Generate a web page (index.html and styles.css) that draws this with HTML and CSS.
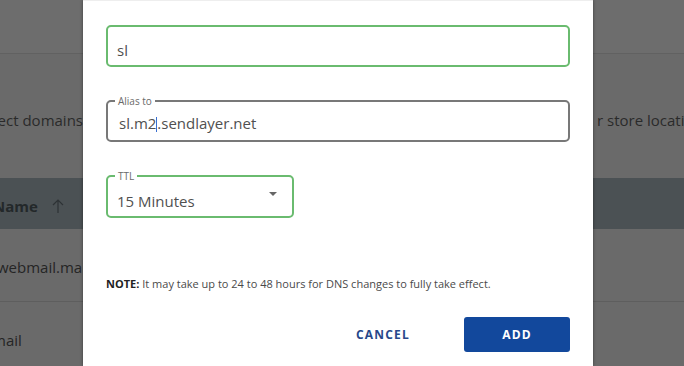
FILE: index.html
```html
<!DOCTYPE html>
<html lang="en">
<head>
  <meta charset="UTF-8" />
  <title>Add DNS record</title>
  <meta name="viewport" content="width=device-width, initial-scale=1" />
  <link rel="stylesheet" href="styles.css">
</head>
<body>
  <div class="page">
    <div class="topbar"></div>
    <div class="intro">
      <span class="intro-left">Select domains</span>
      <span></span>
      <span class="intro-right">r store location</span>
    </div>
    <div class="thead">
      <span class="col-name">Name</span>
      <svg class="sort" width="12" height="15" viewBox="0 0 12 15">
        <path d="M6 14V1M1 6l5-5 5 5" fill="none" stroke="#2e3336" stroke-width="1.2" />
      </svg>
    </div>
    <div class="row"><span class="cell">webmail.mail</span></div>
    <div class="row"><span class="cell cell-cut">mail</span></div>
  </div>

  <div class="modal">
    <div class="field field-active field-first">
      <span class="value">sl</span>
    </div>

    <div class="field field-idle">
      <span class="float-label">Alias to</span>
      <span class="value">sl.m2<span class="caret-line"></span>.sendlayer.net</span>
    </div>

    <div class="field field-active field-select">
      <span class="float-label">TTL</span>
      <span class="value">15 Minutes</span>
      <span class="arrow"></span>
    </div>

    <p class="note"><strong>NOTE:</strong> It may take up to 24 to 48 hours for DNS changes to fully take effect.</p>

    <div class="actions">
      <button class="btn btn-text">CANCEL</button>
      <button class="btn btn-primary">ADD</button>
    </div>
  </div>
</body>
</html>
```

FILE: styles.css
```css
body {
  margin: 0;
  font-family: "Open Sans", Arial, sans-serif;
  background: #6a6a6a;
  color: #222;
  overflow: hidden;
}
.page {
  width: 684px;
  height: 366px;
  display: flex;
  flex-direction: column;
}
.page > div {
  flex-shrink: 0;
}
.topbar {
  height: 53px;
  background: #6d6d6d;
  border-bottom: 1px solid #616161;
}
.intro {
  height: 124px;
  display: grid;
  grid-template-columns: 83px 510px 1fr;
  align-items: center;
  padding-top: 8px;
  box-sizing: border-box;
  font-size: 15px;
  color: #2a2a2a;
  white-space: nowrap;
  overflow: hidden;
}
.intro-left {
  overflow: hidden;
  direction: rtl;
  text-align: right;
}
.intro-right {
  overflow: hidden;
  padding-left: 4px;
}
.thead {
  height: 51px;
  background: #4b5154;
  display: flex;
  align-items: center;
  gap: 14px;
  padding-top: 4px;
  box-sizing: border-box;
}
.col-name {
  margin-left: -7px;
  font-size: 15px;
  font-weight: 700;
  color: #23282a;
}
.sort {
  margin-top: 1px;
}
.row {
  height: 73px;
  border-bottom: 1px solid #5e5e5e;
  display: flex;
  align-items: center;
  box-sizing: border-box;
  padding-top: 4px;
}
.cell {
  margin-left: -3px;
  font-size: 15px;
  color: #252525;
}
.cell-cut {
  margin-left: -8px;
}

.modal {
  position: absolute;
  top: 0;
  left: 83px;
  width: 510px;
  height: 366px;
  background: #fff;
  border-top: 1px solid #eeeeee;
  box-sizing: border-box;
  padding: 24px 23px 0 23px;
  box-shadow: 0 0 3px rgba(0,0,0,0.45);
}
.field {
  position: relative;
  height: 42px;
  border: 2px solid #787878;
  border-radius: 5px;
  box-sizing: border-box;
  display: flex;
  align-items: center;
  padding: 0 9px;
  margin-bottom: 33px;
}
.field-first {
  height: 42px;
  padding-top: 8px;
}
.field-active {
  border-color: #6abb6f;
}
.field-idle {
  padding-left: 11px;
  padding-top: 3px;
}
.field-select {
  width: 188px;
  height: 43px;
  padding-top: 9px;
  justify-content: space-between;
}
.value {
  font-size: 15px;
  color: #505050;
  white-space: nowrap;
}
.float-label {
  position: absolute;
  top: -8px;
  left: 7px;
  padding: 0 3px;
  background: #fff;
  font-size: 10px;
  color: #6a6a6a;
}
.caret-line {
  display: inline-block;
  width: 1px;
  height: 15px;
  background: #3a6fd0;
  vertical-align: -3px;
}
.arrow {
  width: 0;
  height: 0;
  border-left: 4px solid transparent;
  border-right: 4px solid transparent;
  border-top: 4px solid #666;
  margin: -15px 6px 0 0;
}
.note {
  margin: 58px 0 0 0;
  font-size: 11px;
  color: #4a4a4a;
}
.note strong {
  color: #222;
}
.actions {
  display: flex;
  justify-content: flex-end;
  gap: 28px;
  margin-top: 26px;
}
.btn {
  height: 35px;
  border: none;
  border-radius: 3px;
  font-family: "Open Sans", Arial, sans-serif;
  font-size: 12px;
  font-weight: 700;
  letter-spacing: 1.2px;
  cursor: pointer;
}
.btn-text {
  width: 106px;
  background: none;
  color: #27488a;
}
.btn-primary {
  width: 106px;
  background: #12489c;
  color: #fff;
}
```
